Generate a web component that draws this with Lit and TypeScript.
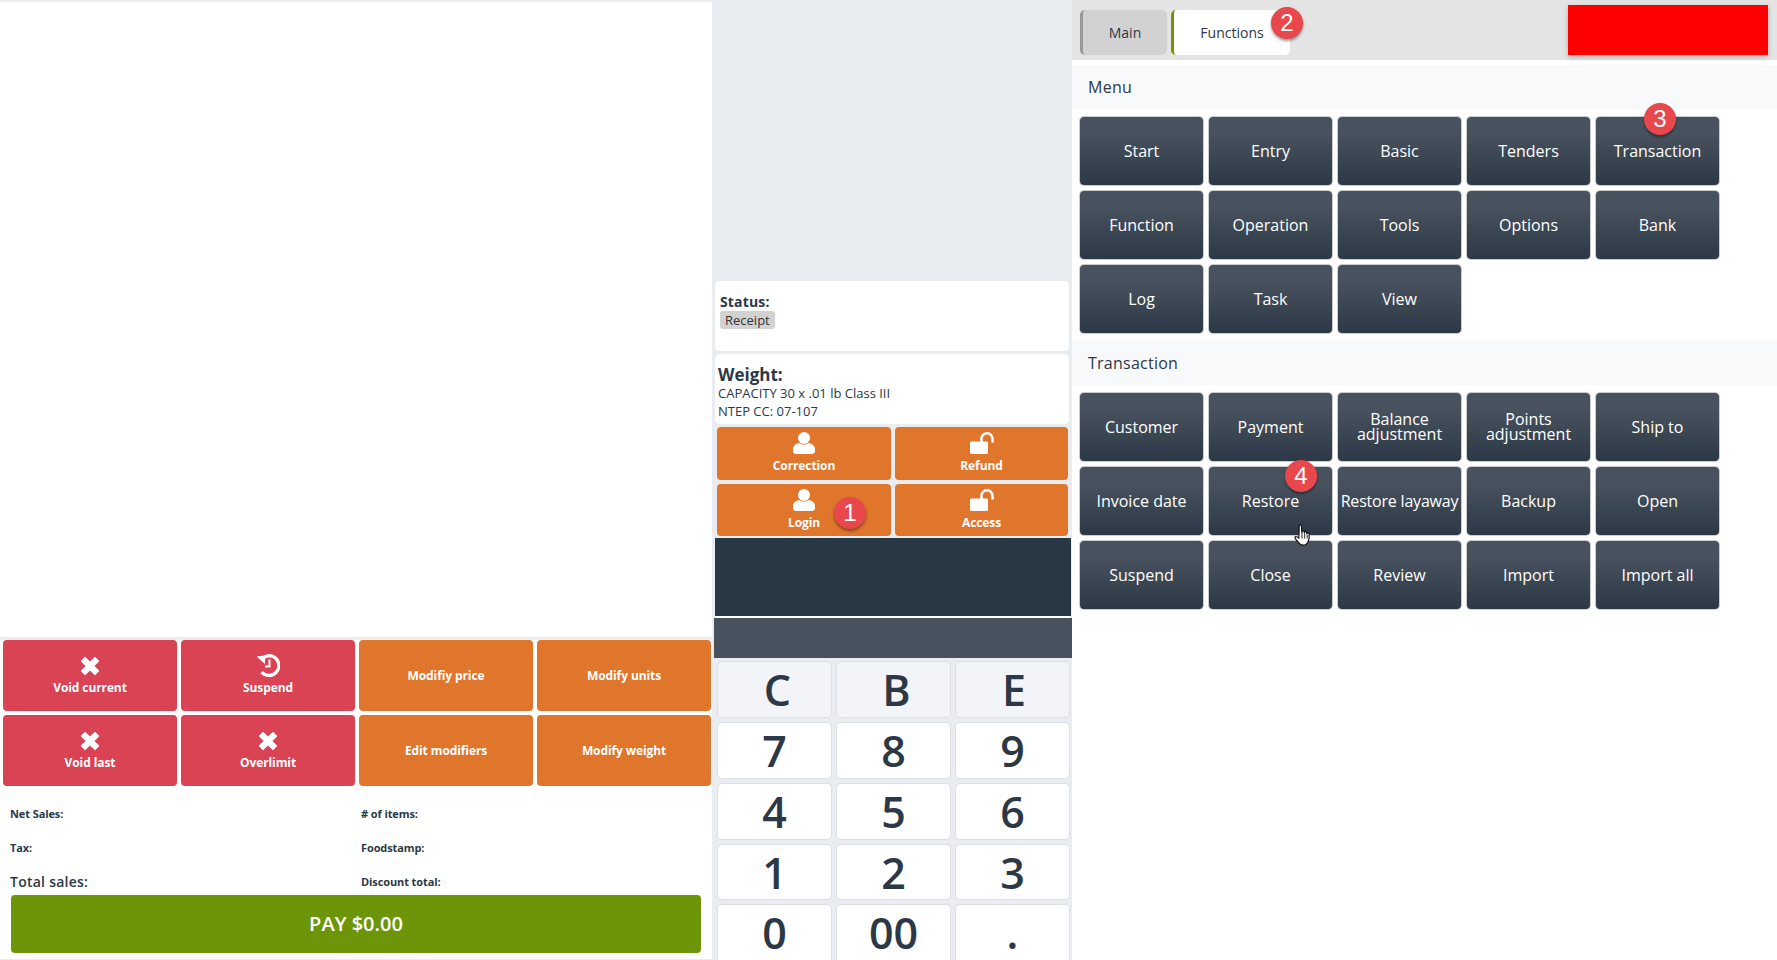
import { LitElement, html, css, svg } from 'lit';
import { customElement } from 'lit/decorators.js';

const xIcon = html`<svg class="ico" width="22" height="22" viewBox="0 0 20 20"><path fill="#fff" stroke="#fff" stroke-linejoin="round" stroke-width="1.500" d="M2.500 5.500l3-3L10 7l4.500-4.500 3 3L13 10l4.500 4.500-3 3L10 13l-4.500 4.500-3-3L7 10z"/></svg>`;
const historyIcon = html`<svg class="ico" width="24" height="23" viewBox="0 0 24 23"><path fill="none" stroke="#fff" stroke-width="3.200" d="M7 4.200A10 10 0 0 1 13 1.600a9.900 9.900 0 0 1 0 19.800 10 10 0 0 1-7.500-3.300"/><path fill="#fff" d="M0.500 2.500 9 1.500V10z"/><path fill="none" stroke="#fff" stroke-width="2" d="M13.500 5.500v7H9"/></svg>`;
const personIcon = html`<svg class="ico" width="22" height="22" viewBox="0 0 22 22"><circle cx="11" cy="6" r="6" fill="#fff"/><path fill="#fff" d="M0 19v-2c0-3 3-5.500 6.500-6 2.500 2 6.500 2 9 0 3.500.5 6.500 3 6.500 6v2c0 1.700-1.300 3-3 3H3c-1.700 0-3-1.300-3-3z"/></svg>`;
const unlockIcon = html`<svg class="ico" width="24" height="22" viewBox="0 0 24 22"><path fill="#fff" d="M1.500 9.500h15c.8 0 1.500.7 1.500 1.500v9.500c0 .8-.7 1.500-1.500 1.500h-15C.7 22 0 21.300 0 20.500V11c0-.8.7-1.500 1.500-1.500z"/><path fill="none" stroke="#fff" stroke-width="2.600" d="M11.500 10V6.800a5.500 5.500 0 0 1 11 0V10.500"/></svg>`;
const handCursor = svg`<path fill="#fff" stroke="#111" stroke-width="1.200" stroke-linejoin="round" d="M5.200 1.600c.2-1.100 2-1.100 2.200 0l.5 7.400.3-1.600c.3-1 1.800-.9 2 .1l.2 1.700.4-1.300c.4-.9 1.700-.7 1.900.3l.2 1.700.5-.8c.5-.7 1.600-.3 1.700.6.300 2.800 0 5.400-.8 7.400-.6 1.700-1.500 3-3 3.600-2 .7-4.400.3-5.700-1.100L1.400 14.800c-.6-.8-.6-1.900.2-2.200.9-.4 1.800.2 3.300 1.600z"/><path fill="none" stroke="#111" stroke-width=".9" d="M8 9.500v5M10.700 10v4.500M13.200 11v3.500"/>`;

const actions = [
  { label: 'Void current', icon: xIcon, color: 'red' },
  { label: 'Suspend', icon: historyIcon, color: 'red' },
  { label: 'Modifiy price', color: 'orange' },
  { label: 'Modify units', color: 'orange' },
  { label: 'Void last', icon: xIcon, color: 'red' },
  { label: 'Overlimit', icon: xIcon, color: 'red' },
  { label: 'Edit modifiers', color: 'orange' },
  { label: 'Modify weight', color: 'orange' },
];

const menuItems = ['Start', 'Entry', 'Basic', 'Tenders', 'Transaction', 'Function', 'Operation', 'Tools', 'Options', 'Bank', 'Log', 'Task', 'View'];
const transactionItems = ['Customer', 'Payment', 'Balance adjustment', 'Points adjustment', 'Ship to', 'Invoice date', 'Restore', 'Restore layaway', 'Backup', 'Open', 'Suspend', 'Close', 'Review', 'Import', 'Import all'];
const keys = ['C', 'B', 'E', '7', '8', '9', '4', '5', '6', '1', '2', '3', '0', '00', '.'];

@customElement('app-root')
export class AppRoot extends LitElement {
  static styles = css`
    :host {
      display: block;
      height: 960px;
      overflow: hidden;
      font-family: 'Open Sans', 'Liberation Sans', sans-serif;
      color: #2c3846;
      background: #fff;
    }
    .page {
      display: flex;
      height: 960px;
    }
    .left {
      width: 712px;
      flex: none;
      display: flex;
      flex-direction: column;
      border-top: 2px solid #e9ecf0;
      box-sizing: border-box;
    }
    .receipt {
      height: 635px;
      flex: none;
      background: #fff;
    }
    .actions {
      display: grid;
      grid-template-columns: repeat(4, 174px);
      grid-auto-rows: 71px;
      column-gap: 4px;
      row-gap: 4px;
      padding: 3px 1px 0 3px;
      height: 150px;
      flex: none;
      box-sizing: border-box;
      background: linear-gradient(#e9ecf0 3px, #fff 3px);
    }
    .action {
      border-radius: 4px;
      color: #fff;
      font-size: 12px;
      font-weight: 700;
      letter-spacing: -0.1px;
      line-height: 16px;
      display: flex;
      flex-direction: column;
      align-items: center;
      justify-content: center;
      text-align: center;
      box-sizing: border-box;
    }
    .action.red {
      background: #d94353;
      padding-bottom: 2px;
    }
    .action.orange { background: #e0752c; }
    .icon-box {
      height: 24px;
      margin-bottom: 2px;
      display: flex;
      align-items: center;
    }
    .stats {
      display: grid;
      grid-template-columns: 351px 1fr;
      grid-auto-rows: 34px;
      padding: 9px 0 0 10px;
      height: 108px;
      flex: none;
      box-sizing: border-box;
      font-size: 11px;
      font-weight: 700;
      letter-spacing: -0.1px;
      align-items: center;
    }
    .stats .total {
      font-size: 14px;
      font-weight: 600;
      letter-spacing: 0.25px;
    }
    .pay {
      margin: 0 11px;
      height: 58px;
      flex: none;
      border-radius: 4px;
      background: #6c9509;
      color: #fff;
      font-size: 20px;
      font-weight: 600;
      padding-bottom: 1px;
      box-sizing: border-box;
      display: flex;
      align-items: center;
      justify-content: center;
    }
    .left-foot {
      flex: 1;
      margin-top: 6px;
      border-bottom: 1px solid #e9ecf0;
    }

    .mid {
      width: 360px;
      flex: none;
      background: #e9ecf0;
      display: flex;
      flex-direction: column;
      overflow: hidden;
    }
    .mid-top {
      height: 281px;
      flex: none;
    }
    .card {
      margin: 0 3px;
      background: #fff;
      border-radius: 5px;
      height: 70px;
      flex: none;
      box-sizing: border-box;
    }
    .status {
      padding: 11px 0 0 5px;
      margin-bottom: 3px;
      font-size: 14px;
      font-weight: 700;
      letter-spacing: 0.15px;
      line-height: 19px;
    }
    .badge {
      display: block;
      width: fit-content;
      padding: 0 5px;
      height: 18px;
      line-height: 18px;
      border-radius: 3px;
      background: #d2d2d2;
      font-size: 13px;
      font-weight: 400;
      letter-spacing: 0;
      color: #333;
    }
    .weight {
      padding: 11px 0 0 3px;
      font-size: 13px;
      line-height: 18px;
    }
    .weight b {
      display: block;
      font-size: 17px;
      line-height: 19px;
    }
    .auth {
      display: grid;
      grid-template-columns: 174px 173px;
      column-gap: 4px;
      row-gap: 4px;
      grid-auto-rows: 52.500px;
      padding: 3px 4px 2px 5px;
      flex: none;
    }
    .auth-btn {
      position: relative;
      background: #e0752c;
      border-radius: 4px;
      color: #fff;
      font-size: 12px;
      font-weight: 700;
      letter-spacing: -0.1px;
      display: flex;
      flex-direction: column;
      align-items: center;
      justify-content: flex-start;
      padding-top: 5px;
      box-sizing: border-box;
      line-height: 17px;
    }
    .auth-btn .ico { margin-bottom: 3px; }
    .display {
      margin: 0 1px 0 3px;
      height: 78px;
      flex: none;
      background: #283744;
      border-bottom: 2px solid #fff;
      box-sizing: content-box;
    }
    .subdisplay {
      margin: 0 0 0 2px;
      height: 40px;
      flex: none;
      background: #48525e;
    }
    .keypad {
      display: grid;
      grid-template-columns: repeat(3, 115px);
      grid-template-rows: repeat(3, 57px) 56px 56px;
      column-gap: 4px;
      row-gap: 4px;
      padding: 3px 0 0 5px;
    }
    .key {
      background: #fff;
      border: 1px solid #dcdfe4;
      border-radius: 5px;
      box-sizing: border-box;
      font-size: 43px;
      font-weight: 600;
      line-height: 1;
      display: flex;
      align-items: center;
      justify-content: center;
    }
    .key:nth-last-child(-n + 3) {
      border-bottom: none;
      border-bottom-left-radius: 0;
      border-bottom-right-radius: 0;
    }
    .key.fn {
      background: #f2f4f7;
      padding-left: 6px;
    }
    .key.fn-last { padding-left: 3px; }

    .right {
      flex: 1;
      min-width: 0;
      display: flex;
      flex-direction: column;
    }
    .tabs {
      height: 60px;
      flex: none;
      background: #e4e4e4;
      display: flex;
      align-items: flex-start;
      padding: 10px 9px 0 8px;
      box-sizing: border-box;
      gap: 4px;
      margin-bottom: 5px;
    }
    .tab {
      height: 45px;
      border-radius: 5px;
      border-left: 3px solid #999;
      background: #d2d2d2;
      box-sizing: border-box;
      font-size: 14px;
      display: flex;
      align-items: center;
      justify-content: center;
      width: 87px;
    }
    .tab.active {
      position: relative;
      background: #fff;
      border-left-color: #6c9509;
      width: 119px;
    }
    .alert {
      margin: -5px 0 0 auto;
      width: 200px;
      height: 50px;
      background: #f00;
      box-shadow: 0 2px 5px rgba(0, 0, 0, 0.25);
    }
    .section-title {
      height: 44px;
      flex: none;
      background: #f8f9fb;
      font-size: 16px;
      font-weight: 500;
      letter-spacing: 0.25px;
      display: flex;
      align-items: center;
      padding-left: 16px;
      margin-bottom: 8px;
    }
    .section-grid {
      display: grid;
      grid-template-columns: repeat(5, 123px);
      grid-auto-rows: 68px;
      column-gap: 6px;
      row-gap: 6px;
      padding-left: 8px;
      margin-bottom: 8px;
    }
    .func {
      position: relative;
      border-radius: 4px;
      background: linear-gradient(#48525e 25%, #2c3846 100%);
      box-shadow: 0 0 0 1px #ccc;
      color: #fff;
      font-size: 16px;
      line-height: 15px;
      display: flex;
      align-items: center;
      justify-content: center;
      text-align: center;
    }
    .func.wrap { padding: 0 8px; }
    .func.tight { letter-spacing: -0.2px; }

    .pin {
      position: absolute;
      width: 32px;
      height: 32px;
      border-radius: 50%;
      background: #e8474c;
      color: #fff;
      font-family: 'Liberation Sans', sans-serif;
      font-size: 24px;
      font-weight: 400;
      letter-spacing: 0;
      line-height: 32px;
      text-align: center;
      box-shadow: 0 2px 3px rgba(0, 0, 0, 0.4);
      z-index: 2;
    }
    .pin-1 { left: 117px; top: 13px; }
    .pin-2 { left: 97px; top: -3px; }
    .pin-3 { left: 48px; top: -14px; }
    .pin-4 { left: 76px; top: -7px; }
    .cursor {
      position: absolute;
      left: 85px;
      top: 57px;
      z-index: 3;
    }
  `;

  private renderFunc(label: string) {
    const classes = ['func'];
    if (label.includes(' adjustment')) classes.push('wrap');
    if (label === 'Restore layaway') classes.push('tight');
    return html`<div class=${classes.join(' ')}>
      ${label}
      ${label === 'Transaction' ? html`<span class="pin pin-3">3</span>` : ''}
      ${label === 'Restore'
        ? html`<span class="pin pin-4">4</span>
            <svg class="cursor" width="18" height="23" viewBox="0 0 18 23">${handCursor}</svg>`
        : ''}
    </div>`;
  }

  render() {
    return html`
      <div class="page">
        <div class="left">
          <div class="receipt"></div>
          <div class="actions">
            ${actions.map(
              (a) => html`<div class="action ${a.color}">
                ${a.icon ? html`<div class="icon-box">${a.icon}</div>` : ''}<span>${a.label}</span>
              </div>`
            )}
          </div>
          <div class="stats">
            <span>Net Sales:</span><span># of items:</span>
            <span>Tax:</span><span>Foodstamp:</span>
            <span class="total">Total sales:</span><span>Discount total:</span>
          </div>
          <div class="pay">PAY $0.00</div>
          <div class="left-foot"></div>
        </div>

        <div class="mid">
          <div class="mid-top"></div>
          <div class="card status">Status:<span class="badge">Receipt</span></div>
          <div class="card weight">
            <b>Weight:</b>
            CAPACITY 30 x .01 lb Class III<br />
            NTEP CC: 07-107
          </div>
          <div class="auth">
            <div class="auth-btn">${personIcon}<span>Correction</span></div>
            <div class="auth-btn">${unlockIcon}<span>Refund</span></div>
            <div class="auth-btn">${personIcon}<span>Login</span><span class="pin pin-1">1</span></div>
            <div class="auth-btn">${unlockIcon}<span>Access</span></div>
          </div>
          <div class="display"></div>
          <div class="subdisplay"></div>
          <div class="keypad">
            ${keys.map((k, i) => html`<div class="key ${i < 3 ? 'fn' : ''} ${i === 2 ? 'fn-last' : ''}">${k}</div>`)}
          </div>
        </div>

        <div class="right">
          <div class="tabs">
            <div class="tab">Main</div>
            <div class="tab active">Functions<span class="pin pin-2">2</span></div>
            <div class="alert"></div>
          </div>
          <div class="section-title">Menu</div>
          <div class="section-grid">${menuItems.map((m) => this.renderFunc(m))}</div>
          <div class="section-title">Transaction</div>
          <div class="section-grid">${transactionItems.map((m) => this.renderFunc(m))}</div>
        </div>
      </div>
    `;
  }
}

declare global {
  interface HTMLElementTagNameMap {
    'app-root': AppRoot;
  }
}
